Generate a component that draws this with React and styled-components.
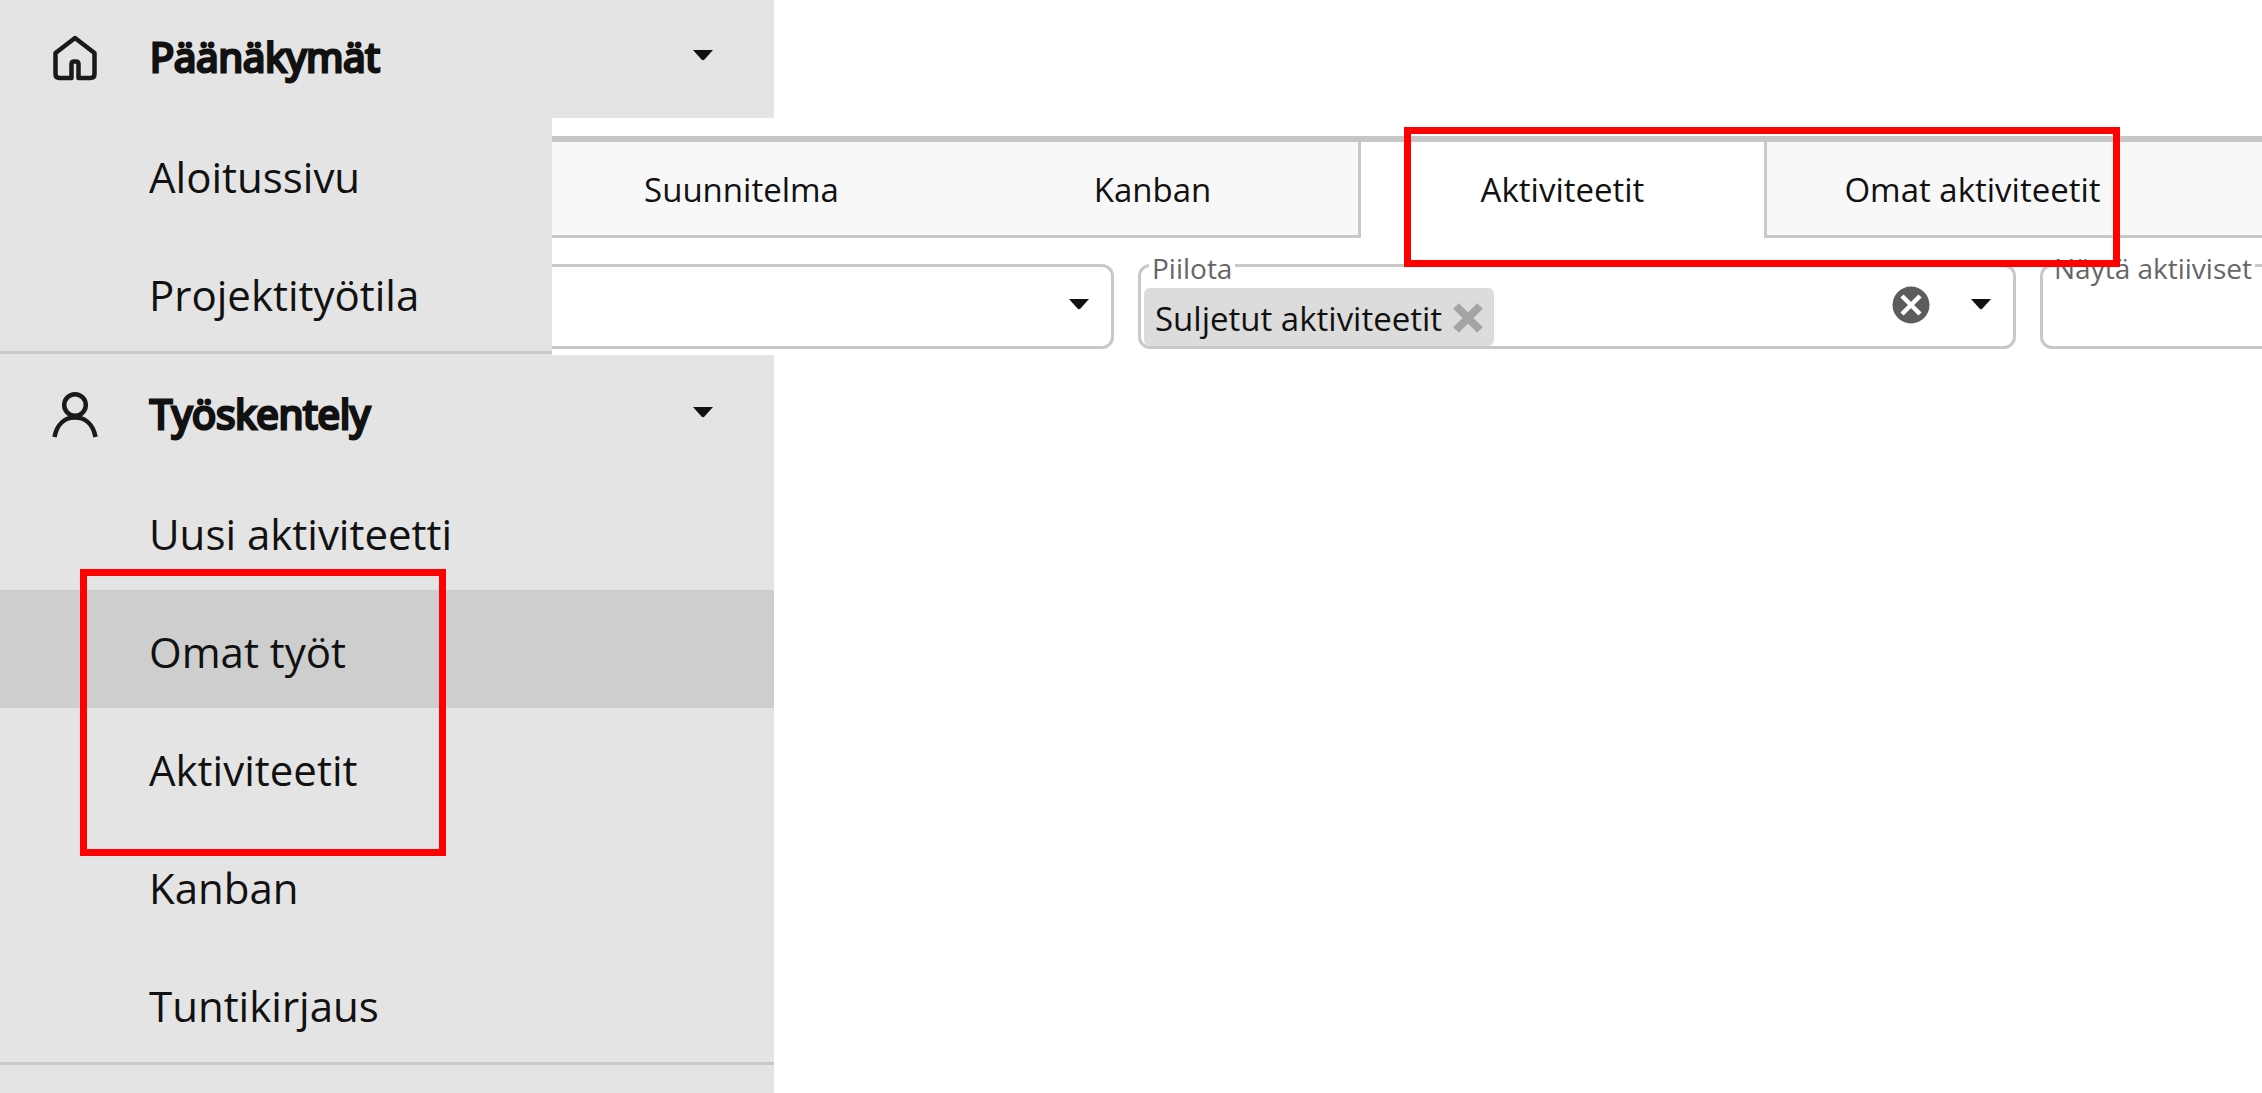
import React, { useState } from "react";
import styled, { createGlobalStyle, css } from "styled-components";

const GlobalStyle = createGlobalStyle`
  * {
    box-sizing: border-box;
  }

  body {
    margin: 0;
    background: #fff;
    color: #111;
    font-family: "Open Sans", "Noto Sans", sans-serif;
  }

  button,
  input,
  select {
    font: inherit;
    color: inherit;
    border: 0;
    padding: 0;
    background: transparent;
    outline: none;
  }

  button {
    cursor: pointer;
  }
`;

// The work area overlaps the right part of the sidebar, so both share grid cells.
const Page = styled.div`
  position: relative;
  display: grid;
  grid-template-columns: 552px 222px 1fr;
  grid-template-rows: 118px 237px 1fr;
  min-height: 100vh;
  overflow: hidden;
`;

const Sidebar = styled.nav`
  grid-column: 1 / 3;
  grid-row: 1 / 4;
  background: #e4e4e4;
  overflow: hidden;
`;

const Section = styled.section`
  border-bottom: 3px solid #c8c8c8;

  &:first-child {
    margin-top: -3px;
  }
`;

const SectionHeader = styled.button`
  display: flex;
  align-items: center;
  width: 100%;
  height: 118px;
  padding: 0 61px 0 50px;
  font-size: 40px;
  text-align: left;
`;

const SectionTitle = styled.span`
  flex: 1;
  margin-left: 50px;
  -webkit-text-stroke: 3px #111;
`;

const LineIcon = styled.svg`
  width: 50px;
  height: 48px;
  margin-top: 4px;
  fill: none;
  stroke: #1a1a1a;
  stroke-width: 4.5;
  stroke-linejoin: round;
`;

const ItemList = styled.ul`
  list-style: none;
  margin: 0;
  padding: 0;
`;

const ItemLink = styled.a`
  display: flex;
  align-items: center;
  height: 118px;
  padding: 4px 0 0 149px;
  font-size: 42px;
  color: inherit;
  text-decoration: none;
  background: ${({ $active }) => ($active ? "#cecece" : "transparent")};
`;

const WorkArea = styled.main`
  grid-column: 2 / 4;
  grid-row: 2;
  min-width: 0;
  padding-top: 18px;
  background: #fff;
  overflow: hidden;
`;

const TabBar = styled.div`
  display: flex;
  border-top: 6px solid #c6c6c6;
`;

const TabGroup = styled.div`
  display: flex;
  height: 96px;
  background: #f8f8f8;
  border: 0 solid #c8c8c8;
  border-bottom-width: 3px;

  ${({ $side }) =>
    $side === "left"
      ? css`
          margin-left: -16px;
          border-right-width: 3px;
        `
      : css`
          flex: 1;
          border-left-width: 3px;
        `}
`;

const Tab = styled.button`
  width: 411px;
  height: 94px;
  font-size: 33px;
  white-space: nowrap;
`;

const ActiveTab = styled(Tab)`
  width: 403px;
`;

const Filters = styled.div`
  display: grid;
  grid-template-columns: 562fr 878fr 222fr;
  gap: 24px;
  margin-top: 26px;
`;

const Field = styled.div`
  position: relative;
  display: flex;
  align-items: center;
  min-width: 0;
  height: 85px;
  border: 3px solid #c8c8c8;
  border-radius: 12px;
  font-size: 33px;

  ${({ $cut }) =>
    $cut === "left" &&
    css`
      border-left: 0;
      border-radius: 0 12px 12px 0;
    `}

  ${({ $cut }) =>
    $cut === "right" &&
    css`
      border-right: 0;
      border-radius: 12px 0 0 12px;
    `}
`;

const FieldLabel = styled.label`
  position: absolute;
  top: -15px;
  left: 8px;
  padding: 0 3px;
  background: #fff;
  color: #666;
  font-size: 28px;
  line-height: 32px;
  white-space: nowrap;
`;

const Select = styled.select`
  flex: 1;
  min-width: 0;
  height: 100%;
  padding-left: 16px;
  appearance: none;
`;

const SelectArrow = styled.span`
  display: flex;
  margin: 0 22px 4px -42px;
  pointer-events: none;
`;

const Chip = styled.span`
  display: flex;
  align-items: center;
  align-self: flex-end;
  gap: 10px;
  height: 58px;
  margin-left: 3px;
  padding: 2px 10px 0 11px;
  border-radius: 6px;
  background: #dcdcdc;
  white-space: nowrap;
`;

const ChipRemove = styled.button`
  display: flex;
  color: #a4a4a4;
`;

const ChipInput = styled.input`
  flex: 1;
  min-width: 0;
  height: 100%;
`;

const ClearButton = styled.button`
  display: flex;
  margin: 0 41px 4px 0;
`;

const ArrowButton = styled.button`
  display: flex;
  margin: 0 22px 4px 0;
`;

const Highlight = styled.div`
  position: absolute;
  border: 7px solid #f00;
  pointer-events: none;
`;

const SidebarHighlight = styled(Highlight)`
  top: 569px;
  left: 80px;
  width: 366px;
  height: 287px;
`;

const TabHighlight = styled(Highlight)`
  top: 127px;
  left: 1404px;
  width: 716px;
  height: 140px;
`;

const Arrow = () => (
  <svg width="20" height="12" viewBox="0 0 20 12" aria-hidden="true">
    <path d="M0 0h20L11.5 9.5q-1.5 1.5-3 0z" fill="#111" />
  </svg>
);

const HomeIcon = () => (
  <LineIcon viewBox="0 0 50 48" aria-hidden="true">
    <path d="M25 4 5.500 19V40q0 4 4 4h12V30q0-2.500 2.500-2.500h2q2.500 0 2.500 2.500v14h12q4 0 4-4V19z" />
  </LineIcon>
);

const PersonIcon = () => (
  <LineIcon viewBox="0 0 50 48" aria-hidden="true">
    <circle cx="25" cy="14" r="10.800" />
    <path d="M4.500 46C7 33 15 26.500 25 26.500S43 33 45.500 46" />
  </LineIcon>
);

const sections = [
  {
    title: "Päänäkymät",
    icon: <HomeIcon />,
    items: ["Aloitussivu", "Projektityötila"],
  },
  {
    title: "Työskentely",
    icon: <PersonIcon />,
    items: ["Uusi aktiviteetti", "Omat työt", "Aktiviteetit", "Kanban", "Tuntikirjaus"],
  },
];

const App = () => {
  const [activeItem, setActiveItem] = useState("Omat työt");
  const [hidden, setHidden] = useState(["Suljetut aktiviteetit"]);

  return (
    <Page>
      <GlobalStyle />

      <Sidebar>
        {sections.map(({ title, icon, items }) => (
          <Section key={title}>
            <SectionHeader type="button" aria-expanded="true">
              {icon}
              <SectionTitle>{title}</SectionTitle>
              <Arrow />
            </SectionHeader>
            <ItemList>
              {items.map((item) => (
                <li key={item}>
                  <ItemLink
                    href="#"
                    $active={item === activeItem}
                    onClick={() => setActiveItem(item)}
                  >
                    {item}
                  </ItemLink>
                </li>
              ))}
            </ItemList>
          </Section>
        ))}
      </Sidebar>

      <WorkArea>
        <TabBar role="tablist">
          <TabGroup $side="left">
            <Tab type="button" role="tab">Suunnitelma</Tab>
            <Tab type="button" role="tab">Kanban</Tab>
          </TabGroup>
          <ActiveTab type="button" role="tab" aria-selected="true">
            Aktiviteetit
          </ActiveTab>
          <TabGroup $side="right">
            <Tab type="button" role="tab">Omat aktiviteetit</Tab>
          </TabGroup>
        </TabBar>

        <Filters>
          <Field $cut="left">
            <Select aria-label="Suodatin" defaultValue="">
              <option value="" />
            </Select>
            <SelectArrow>
              <Arrow />
            </SelectArrow>
          </Field>

          <Field>
            <FieldLabel htmlFor="hide">Piilota</FieldLabel>
            {hidden.map((name) => (
              <Chip key={name}>
                {name}
                <ChipRemove type="button" aria-label="Poista" onClick={() => setHidden([])}>
                  <svg width="32" height="32" viewBox="0 0 32 32">
                    <path d="M4 4 28 28M28 4 4 28" stroke="currentColor" strokeWidth="8" />
                  </svg>
                </ChipRemove>
              </Chip>
            ))}
            <ChipInput id="hide" type="text" />
            <ClearButton type="button" aria-label="Tyhjennä" onClick={() => setHidden([])}>
              <svg width="38" height="38" viewBox="0 0 38 38">
                <circle cx="19" cy="19" r="18.500" fill="#5c5c5c" />
                <path d="m10 10 18 18M28 10 10 28" stroke="#fff" strokeWidth="4.500" />
              </svg>
            </ClearButton>
            <ArrowButton type="button" aria-label="Avaa">
              <Arrow />
            </ArrowButton>
          </Field>

          <Field $cut="right">
            <FieldLabel htmlFor="active">Näytä aktiiviset</FieldLabel>
            <Select id="active" defaultValue="">
              <option value="" />
            </Select>
          </Field>
        </Filters>
      </WorkArea>

      <SidebarHighlight />
      <TabHighlight />
    </Page>
  );
};

export default App;
